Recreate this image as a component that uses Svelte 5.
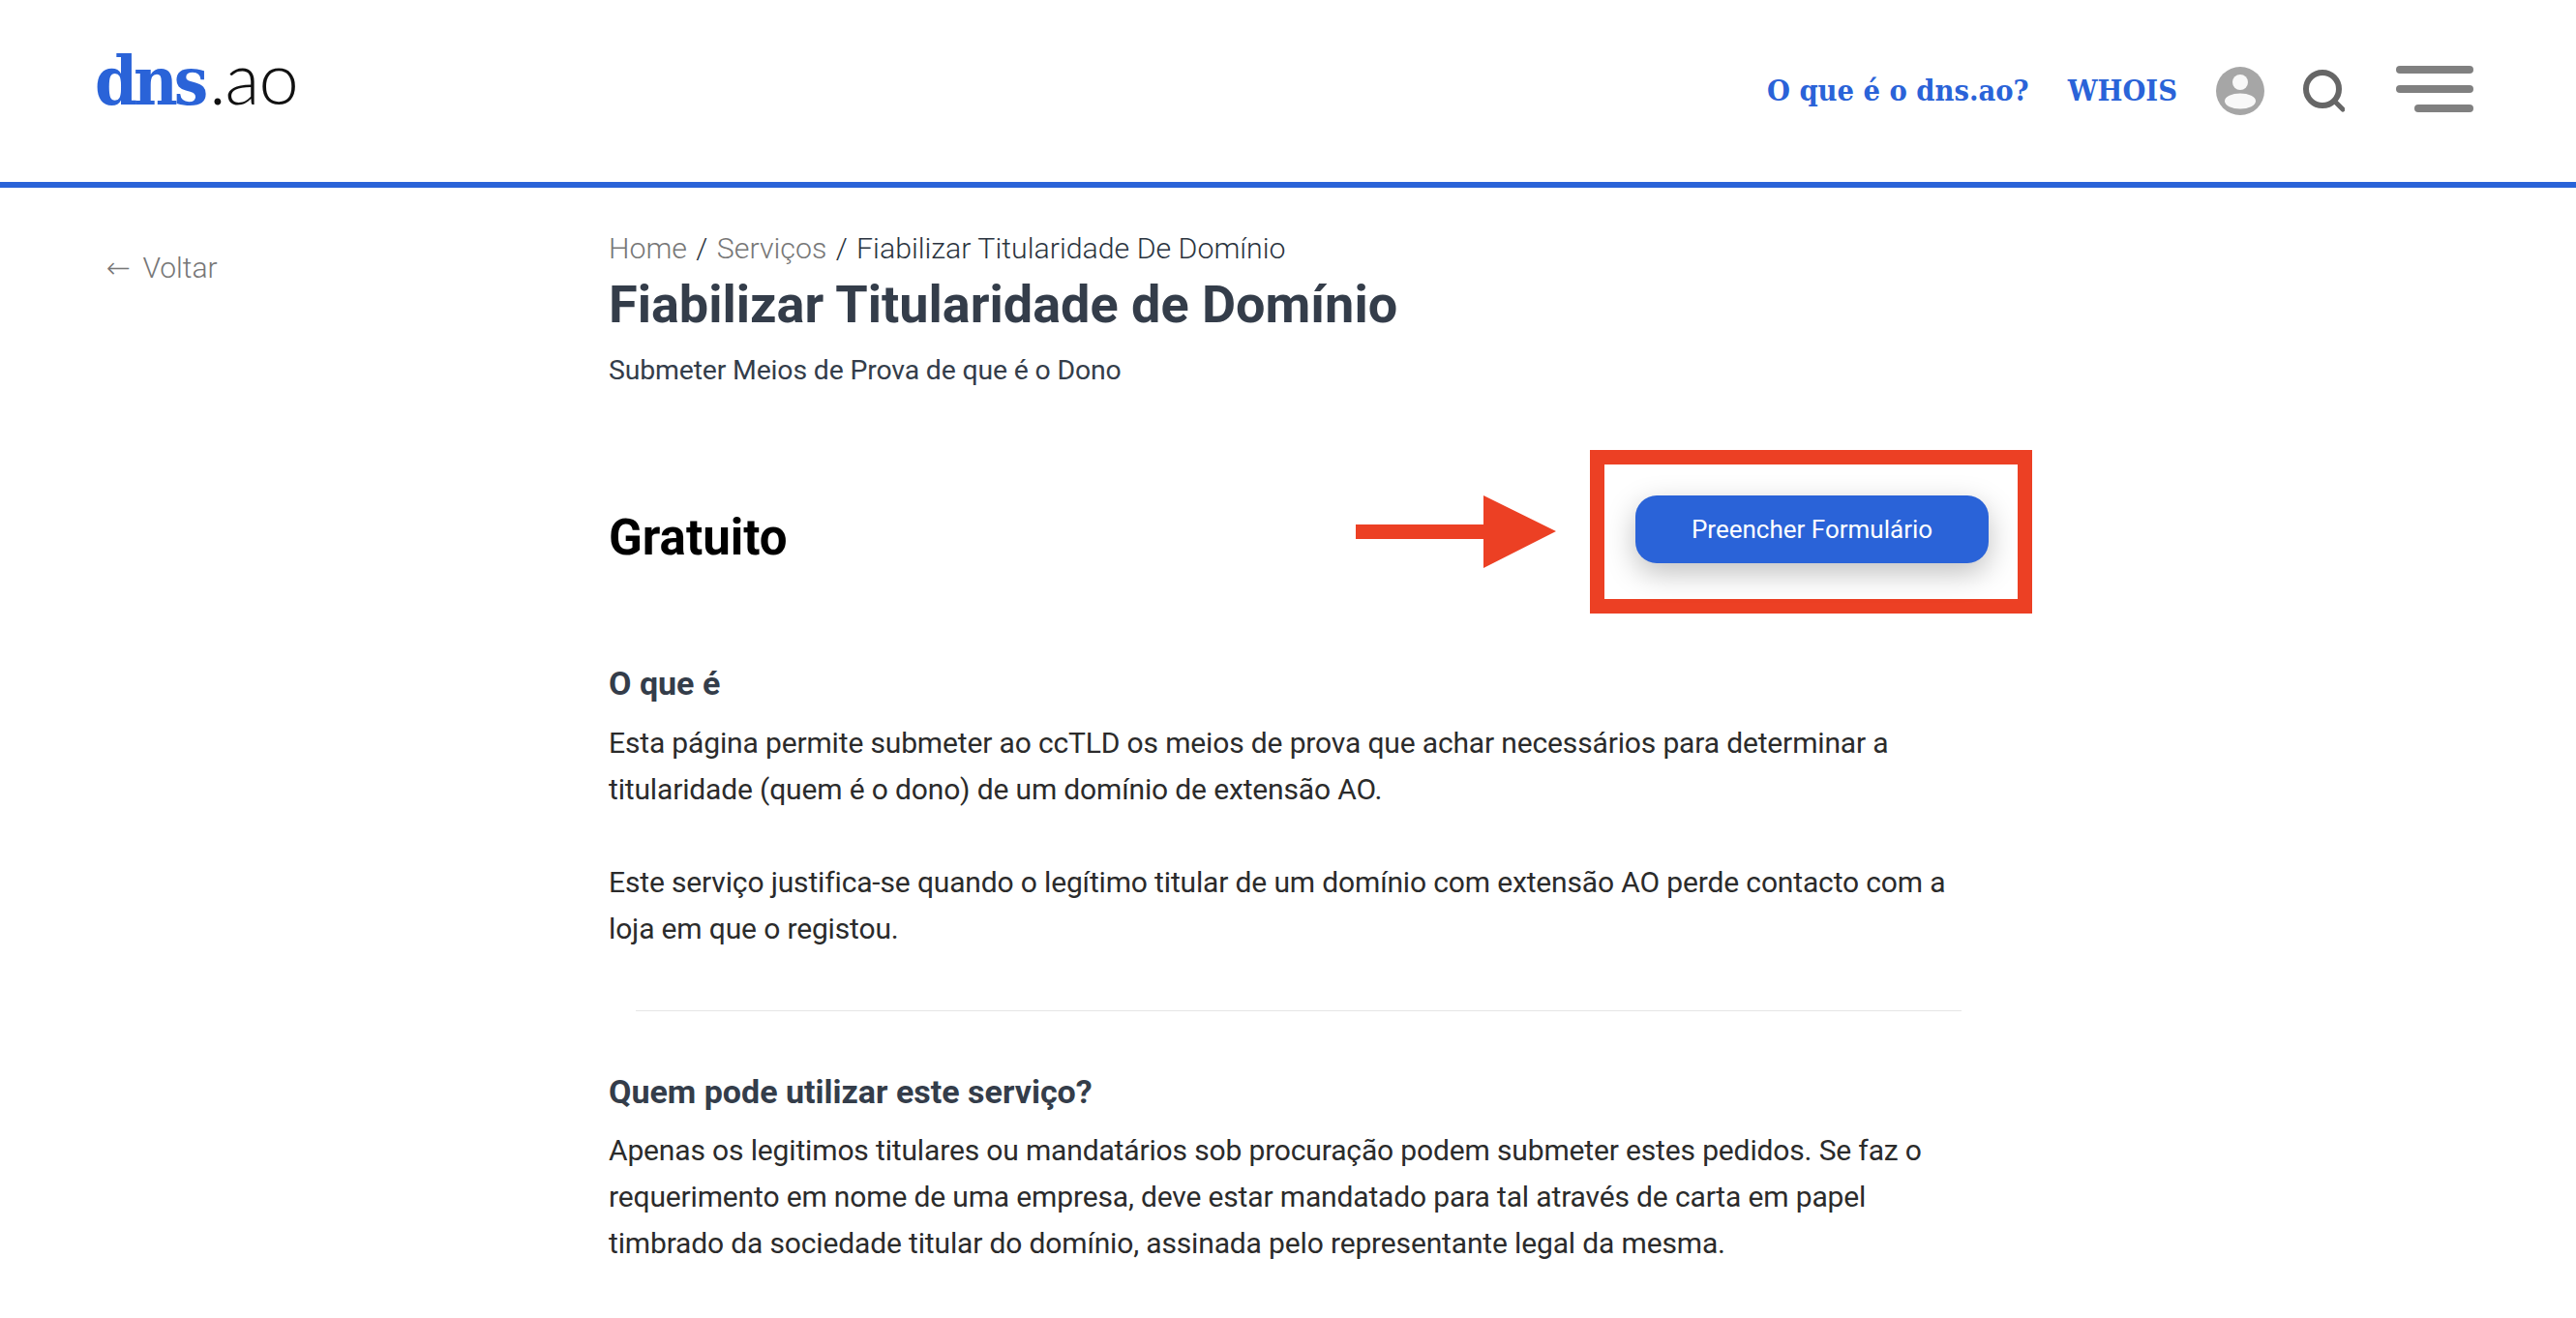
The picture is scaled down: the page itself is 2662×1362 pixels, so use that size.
<script>
  const nav = ['O que é o dns.ao?', 'WHOIS'];
</script>

<header class="top">
  <a class="logo" href="#home"><span class="logo-dns">dns</span><span class="logo-ao">.ao</span></a>
  <nav class="menu">
    {#each nav as item}
      <a href="#x">{item}</a>
    {/each}
    <svg class="user" width="50" height="50" viewBox="0 0 50 50">
      <circle cx="25" cy="25" r="25" fill="#a6a6a6" />
      <circle cx="25" cy="16" r="8" fill="#f8f8f8" />
      <ellipse cx="25" cy="35.5" rx="16" ry="8" fill="#f8f8f8" />
    </svg>
    <svg class="search" width="44" height="44" viewBox="0 0 44 44">
      <circle cx="21" cy="20" r="17" fill="none" stroke="#666" stroke-width="6" />
      <path d="M33 32l9 9" stroke="#666" stroke-width="5" stroke-linecap="round" />
    </svg>
    <div class="burger"><span></span><span></span><span class="short"></span></div>
  </nav>
</header>

<main class="page">
  <a class="back" href="#b"><span class="back-arrow">←</span> Voltar</a>
  <section class="content">
    <div class="crumbs"><a href="#h">Home</a> <i>/</i> <a href="#s">Serviços</a> <i>/</i> Fiabilizar Titularidade De Domínio</div>
    <h1>Fiabilizar Titularidade de Domínio</h1>
    <p class="sub">Submeter Meios de Prova de que é o Dono</p>

    <div class="price-row">
      <h2>Gratuito</h2>
      <svg class="arrow" width="207" height="75" viewBox="0 0 207 75">
        <path d="M0 30h132V0l75 37-75 38V45H0z" fill="#ec4024" />
      </svg>
      <div class="hilite"><button>Preencher Formulário</button></div>
    </div>

    <h3>O que é</h3>
    <p>Esta página permite submeter ao ccTLD os meios de prova que achar necessários para determinar a titularidade (quem é o dono) de um domínio de extensão AO.</p>
    <p class="next">Este serviço justifica-se quando o legítimo titular de um domínio com extensão AO perde contacto com a loja em que o registou.</p>
    <hr />
    <h3>Quem pode utilizar este serviço?</h3>
    <p>Apenas os legitimos titulares ou mandatários sob procuração podem submeter estes pedidos. Se faz o requerimento em nome de uma empresa, deve estar mandatado para tal através de carta em papel timbrado da sociedade titular do domínio, assinada pelo representante legal da mesma.</p>
  </section>
</main>

<style>
  :global(body) {
    margin: 0;
    background: #fff;
    height: 1362px;
    overflow: hidden;
    font-family: Roboto, "Noto Sans", sans-serif;
    color: #343d4a;
  }
  a { text-decoration: none; }
  .top {
    height: 188px;
    border-bottom: 6px solid #2a63d8;
    display: flex;
    justify-content: space-between;
    align-items: flex-start;
    padding: 0 106px 0 98px;
  }
  .logo { margin-top: 40px; line-height: 80px; }
  .logo-dns { color: #2a63d8; font-family: "DejaVu Serif", serif; font-weight: 700; font-size: 70px; letter-spacing: -4px; font-stretch: condensed; }
  .logo-ao { color: #111; font-family: "Lato", sans-serif; font-weight: 300; font-size: 74px; letter-spacing: -1px; margin-left: 5px; }
  .menu { display: flex; align-items: flex-start; padding-top: 70px; }
  .menu a { color: #2a63d8; font-family: "DejaVu Serif", serif; font-stretch: condensed; font-weight: 700; font-size: 30.5px; line-height: 46px; margin-right: 40px; }
  .user { margin-top: -1px; margin-right: 39px; }
  .search { margin-top: 2px; margin-right: 53px; }
  .burger { display: flex; flex-direction: column; align-items: flex-end; gap: 12px; margin-top: -2px; }
  .burger span { display: block; width: 80px; height: 8px; border-radius: 4px; background: #808080; }
  .burger .short { width: 61px; }
  .page { display: flex; padding-left: 110px; }
  .back { width: 519px; color: #777; font-size: 30px; font-weight: 300; margin-top: 65px; }
  .back-arrow { font-family: "DejaVu Sans", sans-serif; margin-right: 5px; }
  .content { width: 1412px; padding-top: 41px; }
  .crumbs { font-size: 30.3px; font-weight: 300; color: #2b3440; line-height: 44px; }
  .crumbs a { color: #777; }
  .crumbs i { font-style: normal; margin: 0 2px; }
  h1 { font-size: 54px; margin: 3px 0 0; line-height: 66px; color: #343d4a; }
  .sub { font-size: 28.4px; font-weight: 400; margin: 11px 0 0; color: #343d4a; }
  .price-row { display: flex; align-items: center; height: 169px; width: 1471px; margin-top: 58px; }
  h2 { font-size: 51px; margin: 12px 0 0; color: #000; width: 772px; }
  .arrow { margin-right: 35px; }
  .hilite { box-sizing: border-box; border: 15px solid #ec4024; width: 457px; height: 169px; display: flex; align-items: center; justify-content: center; }
  button { width: 365px; height: 70px; border: 0; border-radius: 22px; background: #2a63d8; color: #fff; font: 400 26px Roboto, sans-serif; box-shadow: 0 10px 30px rgba(0,0,0,.25); margin: -5px 0 0 2px; }
  h3 { font-size: 34px; margin: 50px 0 16px; line-height: 44px; color: #343d4a; }
  hr + h3 { margin-bottom: 15px; }
  p { font-size: 30px; font-weight: 400; line-height: 48px; margin: 0; color: #2b2b2b; letter-spacing: -0.15px; }
  .next { margin-top: 48px; }
  hr { border: 0; border-top: 1px solid #e6e6e6; margin: 60px 0 61px 28px; width: 1370px; }
</style>
